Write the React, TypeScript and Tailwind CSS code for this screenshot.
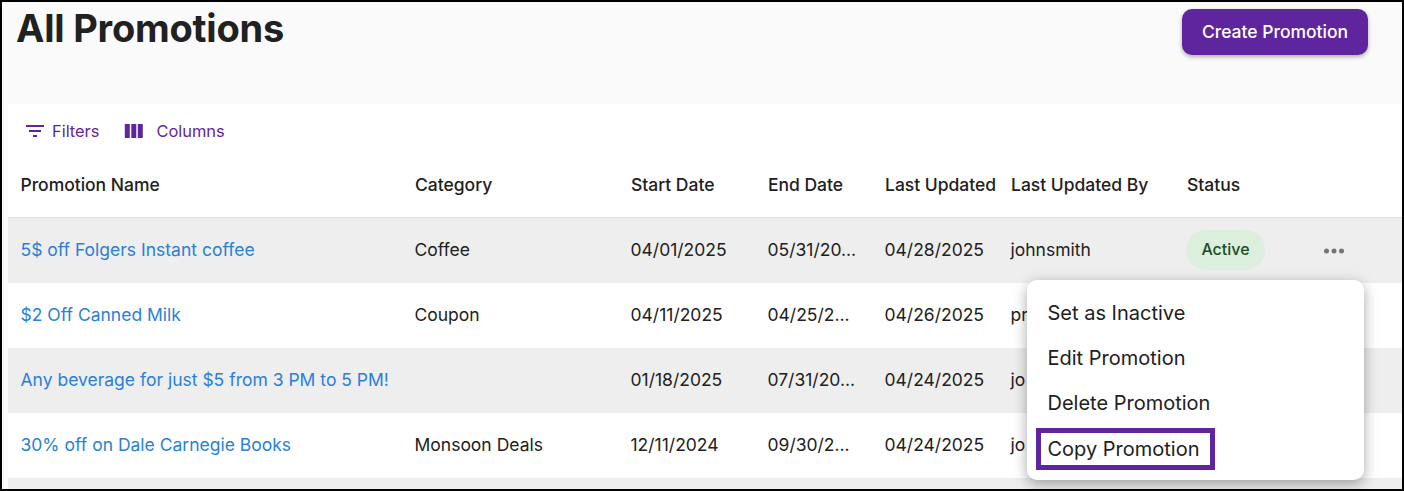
const FONT = "font-['Inter',sans-serif]";

const rows = [
  { name: '5$ off Folgers Instant coffee', category: 'Coffee', start: '04/01/2025', end: '05/31/20...', updated: '04/28/2025', by: 'johnsmith', active: true },
  { name: '$2 Off Canned Milk', category: 'Coupon', start: '04/11/2025', end: '04/25/2...', updated: '04/26/2025', by: 'pr', active: false },
  { name: 'Any beverage for just $5 from 3 PM to 5 PM!', category: '', start: '01/18/2025', end: '07/31/20...', updated: '04/24/2025', by: 'jo', active: false },
  { name: '30% off on Dale Carnegie Books', category: 'Monsoon Deals', start: '12/11/2024', end: '09/30/2...', updated: '04/24/2025', by: 'jo', active: false },
];

const menuItems = ['Set as Inactive', 'Edit Promotion', 'Delete Promotion'];

export default function App() {
  return (
    <div className={`${FONT} relative h-[491px] w-[1404px] overflow-hidden border-2 border-black bg-[#fafafa] text-[#212121]`}>
      {/* Header */}
      <div className="flex h-[102px] items-start justify-between pl-[14px] pr-[34px]">
        <h1 className="mt-[4px] text-[38px] leading-[44px] font-bold tracking-[-0.2px]">All Promotions</h1>
        <button className="mt-[7px] h-[46px] w-[186px] rounded-[10px] bg-[#5f259f] text-[17.5px] font-medium text-white shadow-[0_2px_4px_rgba(0,0,0,0.3)]">
          Create Promotion
        </button>
      </div>

      {/* Table */}
      <div className="ml-[6px] bg-white">
        <div className="flex h-[55px] items-center gap-[23px] pl-[15px] text-[16.4px] text-[#5f259f]">
          <button className="flex items-center gap-[5px]">
            <svg width="24" height="24" viewBox="0 0 24 24" fill="currentColor">
              <path d="M10 18h4v-2h-4v2zM3 6v2h18V6H3zm3 7h12v-2H6v2z" />
            </svg>
            Filters
          </button>
          <button className="flex items-center gap-[10px]">
            <svg width="24" height="24" viewBox="0 0 24 24" fill="currentColor">
              <rect x="2.8" y="5" width="5" height="14" rx="0.6" />
              <rect x="9.3" y="5" width="5" height="14" rx="0.6" />
              <rect x="15.8" y="5" width="5" height="14" rx="0.6" />
            </svg>
            Columns
          </button>
        </div>

        <div className="flex h-[59px] items-center border-b border-[#e0e0e0] pb-[5px] pl-[13px] text-[17.5px] font-medium tracking-[-0.02px]">
          <div className="w-[394px] -translate-x-[0.5px]">Promotion Name</div>
          <div className="w-[216px]">Category</div>
          <div className="w-[137px]">Start Date</div>
          <div className="w-[117px]">End Date</div>
          <div className="w-[126px]">Last Updated</div>
          <div className="w-[176px]">Last Updated By</div>
          <div>Status</div>
        </div>

        {rows.map((row, i) => (
          <div key={row.name} className={`flex h-[65px] items-center pl-[12.5px] text-[17.5px] ${i % 2 === 0 ? 'bg-[#eeeeee]' : 'bg-white'}`}>
            <a className="w-[394px] text-[#2a7fd9]">{row.name}</a>
            <div className="w-[216px]">{row.category}</div>
            <div className="w-[137px]">{row.start}</div>
            <div className="w-[117px]">{row.end}</div>
            <div className="w-[126px]">{row.updated}</div>
            <div className="w-[176px]">{row.by}</div>
            {row.active && (
              <>
                <span className="-mt-[1px] -ml-[0.5px] flex h-[40px] w-[79px] items-center justify-center rounded-[20px] bg-[#dcefdc] pb-[2px] text-[16px] font-medium text-[#1b4d1f]">
                  Active
                </span>
                <svg className="ml-[54px]" width="30" height="30" viewBox="0 0 24 24" fill="#757575">
                  <circle cx="6" cy="12" r="2" />
                  <circle cx="12" cy="12" r="2" />
                  <circle cx="18" cy="12" r="2" />
                </svg>
              </>
            )}
          </div>
        ))}
        <div className="h-[20px] bg-[#eeeeee]" />
      </div>

      {/* Row actions menu */}
      <div className="absolute top-[278px] left-[1025px] flex h-[200px] w-[337px] flex-col rounded-[10px] bg-white pt-[10px] text-[20px] shadow-[0_4px_14px_rgba(0,0,0,0.35)]">
        {menuItems.map((item) => (
          <div key={item} className="flex h-[45px] items-center pl-[20.5px]">{item}</div>
        ))}
        <div className="mt-[3px] ml-[9px] flex h-[42px] w-[179px] items-center border-[5px] border-[#5f259f] pl-[6.5px]">Copy Promotion</div>
      </div>
    </div>
  );
}
